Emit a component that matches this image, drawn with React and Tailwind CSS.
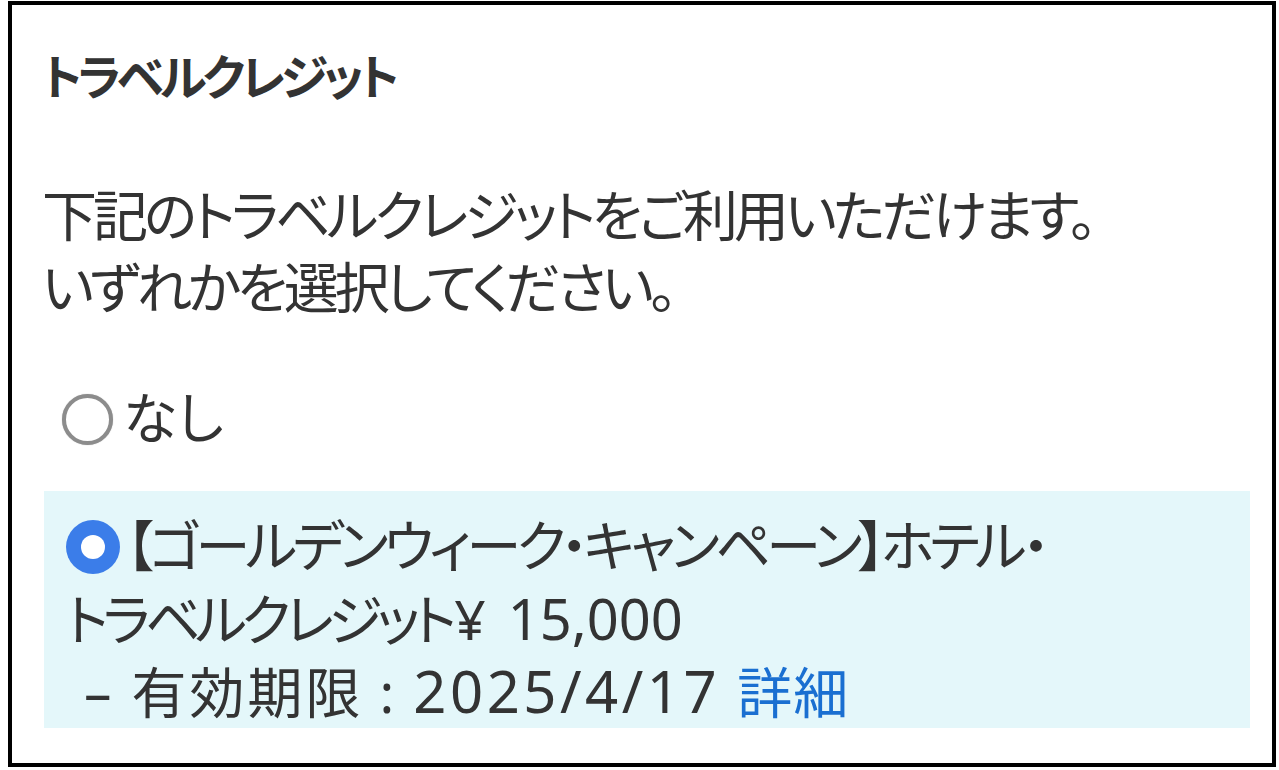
import React from 'react';

const font = { fontFamily: '"Noto Sans", "Noto Sans CJK JP", sans-serif' };

function Radio({ checked }) {
    if (checked) {
        return (
            <span className="inline-flex items-center justify-center align-middle w-[54px] h-[54px] rounded-full bg-[#3b7de9] mb-[8px] mr-[6px]">
                <span className="w-[24px] h-[24px] rounded-full bg-white"></span>
            </span>
        );
    }
    return (
        <span className="inline-block align-middle w-[51px] h-[51px] rounded-full border-[4px] border-[#8c8c8c] bg-white mb-[8px] mr-[10px] shadow-[0_0_1px_#aaa]"></span>
    );
}

export default function App() {
    return (
        <div className="w-[1279px] h-[770px] bg-white pt-[1px] pl-[8px]" style={font}>
            <div className="w-[1268px] h-[766px] border-4 border-black pl-[30px] pr-[26px] text-[#333333] [font-feature-settings:'palt']">
                <h2 className="mt-[42px] text-[48px] leading-[60px] font-bold tracking-[-4.5px]">トラベルクレジット</h2>

                <p className="mt-[72px] text-[55px] leading-[72px] tracking-[-4px]">
                    下記のトラベルクレジットをご利用いただけます。<br />
                    いずれかを選択してください。
                </p>

                <div className="mt-[58px] pl-[20px] text-[55px] leading-[72px]">
                    <Radio checked={false} />なし
                </div>

                <div className="mt-[38px] ml-[2px] w-[1206px] h-[237px] bg-[#e4f7fa] pt-[18px] pl-[22px] text-[55px] leading-[72px]">
                    <Radio checked />
                    <span className="tracking-[-4.5px]">【ゴールデンウィーク・キャンペーン】ホテル・</span>
                    <br />
                    <span className="tracking-[-5.5px]">トラベルクレジット</span>
                    <span className="ml-[3px] mr-[22px]">¥</span>
                    <span className="text-[56px]">15,000</span>
                    <br />
                    <span className="ml-[18px] mr-[20px]">–</span>
                    <span className="tracking-[3px]">有効期限</span>
                    <span className="ml-[16px] mr-[19px]">:</span>
                    <span className="text-[58px] tracking-[3.5px]">2025/4/17</span>
                    <a href="#" className="ml-[17px] text-[#1a6fd1] tracking-[1px]">詳細</a>
                </div>
            </div>
        </div>
    );
}
